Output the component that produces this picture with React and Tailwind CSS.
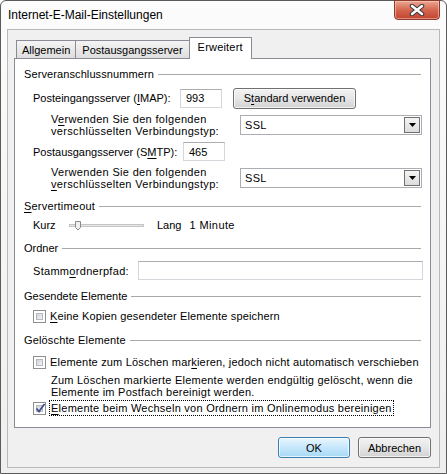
import React from "react";

const font = "font-['Liberation_Sans',Arial,sans-serif]";

function U({ children }) {
  return <span className="underline underline-offset-[2px] decoration-[1px]">{children}</span>;
}

function GroupHeader({ children, mt, track = "" }) {
  return (
    <div className={`flex h-[16px] items-center pr-[9px] ${mt}`}>
      <span className={`whitespace-nowrap ${track}`}>{children}</span>
      <div className="ml-[4px] h-px flex-1 bg-[#a9a9a9]" />
    </div>
  );
}

function TextBox({ value, className }) {
  return (
    <div
      className={`flex items-center border border-[#d3d6db] border-t-[#abadb3] bg-white pl-[5px] ${className}`}
    >
      {value}
    </div>
  );
}

function Combo({ value }) {
  return (
    <div className="flex h-[20px] w-[182px] items-center border border-[#abadb3] bg-white pl-[4px] pr-[1px]">
      <span className="flex-1 tracking-[0.3px]">{value}</span>
      <div className="flex h-[16px] w-[16px] items-center justify-center border border-[#707070] bg-gradient-to-b from-[#f4f4f4] to-[#dcdcdc]">
        <svg width="7" height="4" viewBox="0 0 7 4">
          <path d="M0 0 H7 L3.5 4 Z" fill="#000" />
        </svg>
      </div>
    </div>
  );
}

function Checkbox({ checked }) {
  return (
    <div className="flex h-[13px] w-[13px] shrink-0 items-center justify-center border border-[#8e8f8f] bg-white p-[2px]">
      <div className="relative h-full w-full border border-[#b5b9bf] bg-gradient-to-br from-[#cfd2d7] to-[#f4f4f4]">
        {checked && (
          <svg className="absolute left-[-2px] top-[-3px]" width="11" height="11" viewBox="0 0 11 11">
            <path d="M1.5 5.5 L4 8.5 L9.5 1" stroke="#3c4f8c" strokeWidth="1.8" fill="none" />
          </svg>
        )}
      </div>
    </div>
  );
}

function WinButton({ children, className, primary }) {
  return (
    <div
      className={`flex h-[21px] items-center justify-center rounded-[3px] border ${
        primary
          ? "border-[#3c7fb1] bg-gradient-to-b from-[#eaf6fd] via-[#c6e7fb] to-[#a7d9f5]"
          : "border-[#707070] bg-gradient-to-b from-[#f2f2f2] via-[#e6e6e6] to-[#d2d2d2]"
      } shadow-[inset_0_0_0_1px_rgba(255,255,255,0.7)] ${className}`}
    >
      {children}
    </div>
  );
}

export default function App() {
  return (
    <div className={`${font} relative h-[474px] w-[447px] bg-white text-[11px] leading-[12px] text-black`}>
      <div className="relative h-[474px] w-[447px] rounded-t-[6px] border border-[#5b5b5b] bg-gradient-to-b from-[#fcfcfc] to-[#efefef]">
        {/* title bar */}
        <div className="flex h-[28px] items-center pl-[7px] text-[12px]">Internet-E-Mail-Einstellungen</div>
        <div className="absolute right-[6px] top-[-1px] flex h-[20px] w-[46px] items-center justify-center rounded-b-[4px] border border-[#8c3a2c] bg-gradient-to-b from-[#eaa793] via-[#d4654f] to-[#c2442d] shadow-[inset_0_0_0_1px_rgba(255,220,210,0.5)]">
          <svg width="16" height="12" viewBox="0 0 16 12">
            <path d="M3 2 L13 10 M13 2 L3 10" stroke="#3b3b3b" strokeWidth="4.5" strokeLinecap="round" />
            <path d="M3 2 L13 10 M13 2 L3 10" stroke="#ffffff" strokeWidth="2.4" strokeLinecap="round" />
          </svg>
        </div>

        {/* client area */}
        <div className="mx-[6px] flex h-[439px] flex-col border border-[#b9b9b9] bg-[#f0f0f0] pl-[6px] pr-[8px] pt-[7px]">
          {/* tabs */}
          <div className="relative z-10 flex h-[21px] items-end pl-[2px]">
            <div className="flex h-[18px] items-center border border-b-0 border-[#898c95] bg-gradient-to-b from-[#f4f4f4] to-[#dedede] px-[5px]">
              Allgemein
            </div>
            <div className="flex h-[18px] items-center border border-b-0 border-l-0 border-[#898c95] bg-gradient-to-b from-[#f4f4f4] to-[#dedede] px-[6px]">
              Postausgangsserver
            </div>
            <div className="-ml-[1px] mb-[-1px] flex h-[22px] items-start border border-b-0 border-[#898c95] bg-white px-[8px] pt-[3px] tracking-[0.2px]">
              Erweitert
            </div>
          </div>

          {/* tab panel */}
          <div className="flex h-[370px] flex-col border border-[#898c95] bg-white pl-[9px]">
            <GroupHeader mt="mt-[7px]" track="tracking-[0.1px]">
              Serveranschlussnummern
            </GroupHeader>

            <div className="mt-[6px] flex h-[20px] items-center pl-[9px]">
              <span className="w-[147px]">
                Posteingangsserver (<U>I</U>MAP):
              </span>
              <TextBox value="993" className="h-[19px] w-[42px]" />
              <WinButton className="ml-[11px] w-[123px]">
                S<U>t</U>andard verwenden
              </WinButton>
            </div>

            <div className="mt-[7px] flex h-[20px] items-center pl-[27px]">
              <div className="w-[189px]">
                <div className="tracking-[0.33px]">
                  V<U>e</U>rwenden Sie den folgenden
                </div>
                <div className="tracking-[0.33px]">verschlüsselten Verbindungstyp:</div>
              </div>
              <Combo value="SSL" />
            </div>

            <div className="mt-[7px] flex h-[19px] items-center pl-[9px]">
              <span className="w-[150px]">
                Postausgangsserver (S<U>M</U>TP):
              </span>
              <TextBox value="465" className="h-[19px] w-[42px]" />
            </div>

            <div className="mt-[7px] flex h-[20px] items-center pl-[27px]">
              <div className="w-[189px]">
                <div className="tracking-[0.33px]">Verwenden Sie den folgenden</div>
                <div className="tracking-[0.33px]">
                  <U>v</U>erschlüsselten Verbindungstyp:
                </div>
              </div>
              <Combo value="SSL" />
            </div>

            <GroupHeader mt="mt-[10px]" track="tracking-[0.2px]">
              <U>S</U>ervertimeout
            </GroupHeader>

            <div className="mt-[3px] flex h-[16px] items-center pl-[9px]">
              <span className="w-[36px]">Kurz</span>
              <svg width="76" height="14" viewBox="0 0 76 14" className="shrink-0">
                <rect x="0.5" y="6.5" width="74" height="2" fill="#e7e7e7" stroke="#c4c4c4" />
                <path d="M6.5 3.5 H11.5 V9.5 L9 12 L6.5 9.5 Z" fill="#f0f0f0" stroke="#8a8a8a" />
              </svg>
              <span className="ml-[12px]">Lang</span>
              <span className="ml-[8px] tracking-[0.4px]">1 Minute</span>
            </div>

            <GroupHeader mt="mt-[7px]">Ordner</GroupHeader>

            <div className="mt-[5px] flex h-[19px] items-center pl-[9px]">
              <span className="w-[105px] tracking-[0.3px]">
                Stamm<U>o</U>rdnerpfad:
              </span>
              <TextBox value="" className="h-[19px] w-[285px]" />
            </div>

            <GroupHeader mt="mt-[8px]">Gesendete Elemente</GroupHeader>

            <div className="mt-[4px] flex h-[16px] items-center gap-[4px] pl-[9px]">
              <Checkbox />
              <span className="tracking-[0.14px]">
                <U>K</U>eine Kopien gesendeter Elemente speichern
              </span>
            </div>

            <GroupHeader mt="mt-[8px]" track="tracking-[0.15px]">
              Gelöschte Elemente
            </GroupHeader>

            <div className="mt-[6px] flex h-[16px] items-center gap-[4px] pl-[9px]">
              <Checkbox />
              <span className="whitespace-nowrap tracking-[0.18px]">
                Elemente zum Löschen mar<U>k</U>ieren, jedoch nicht automatisch verschieben
              </span>
            </div>

            <div className="mt-[4px] h-[24px] whitespace-nowrap pl-[27px]">
              <div className="tracking-[0.24px]">
                Zum Löschen markierte Elemente werden endgültig gelöscht, wenn die
              </div>
              <div className="tracking-[0.24px]">Elemente im Postfach bereinigt werden.</div>
            </div>

            <div className="mt-[2px] flex h-[16px] items-center gap-[3px] pl-[9px]">
              <Checkbox checked />
              <span className="whitespace-nowrap border border-dotted border-black px-[1px] py-px tracking-[0.25px]">
                <U>E</U>lemente beim Wechseln von Ordnern im Onlinemodus bereinigen
              </span>
            </div>
          </div>

          {/* dialog buttons */}
          <div className="mt-[9px] flex justify-end gap-[8px]">
            <WinButton primary className="w-[72px]">
              OK
            </WinButton>
            <WinButton className="w-[73px]">Abbrechen</WinButton>
          </div>
        </div>
      </div>
    </div>
  );
}
